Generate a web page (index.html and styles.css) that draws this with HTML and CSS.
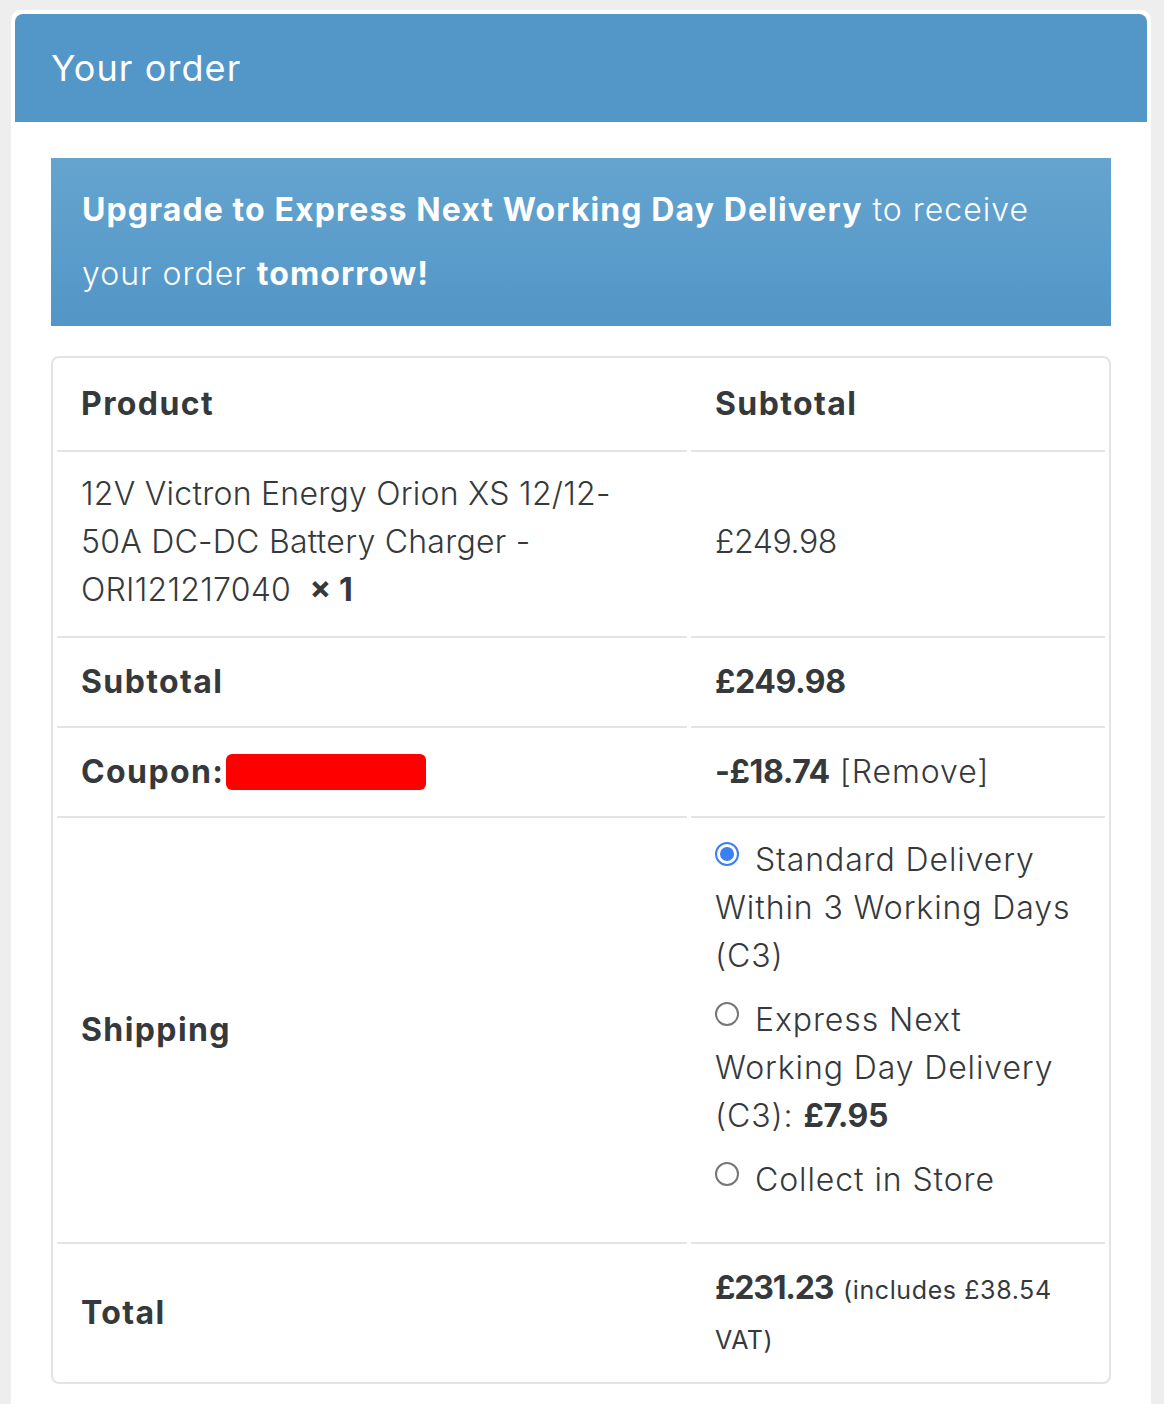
FILE: index.html
```html
<!DOCTYPE html>
<html lang="en">
<head>
<meta charset="utf-8">
<title>Your order</title>
<link rel="stylesheet" href="styles.css">
</head>
<body>
<div class="card">
  <h3 class="card-title">Your order</h3>
  <div class="card-body">
    <div class="upsell">
      <strong>Upgrade to Express Next Working Day Delivery</strong> to receive your order <strong>tomorrow!</strong>
    </div>
    <table class="order-table">
      <colgroup>
        <col class="col-left">
        <col class="col-right">
      </colgroup>
      <thead>
        <tr>
          <th>Product</th>
          <th>Subtotal</th>
        </tr>
      </thead>
      <tbody>
        <tr class="item-row">
          <td class="product-name">12V Victron Energy Orion XS 12/12-50A DC-DC Battery Charger - ORI121217040&nbsp; <strong class="qty">×&nbsp;1</strong></td>
          <td class="num">£249.98</td>
        </tr>
      </tbody>
      <tfoot>
        <tr>
          <th>Subtotal</th>
          <td><strong class="num">£249.98</strong></td>
        </tr>
        <tr>
          <th>Coupon: <span class="redact"></span></th>
          <td><strong class="num">-£18.74</strong> [Remove]</td>
        </tr>
        <tr>
          <th>Shipping</th>
          <td class="shipping">
            <ul class="methods">
              <li><span class="radio checked"></span>Standard Delivery Within 3 Working Days (C3)</li>
              <li><span class="radio"></span>Express Next Working Day Delivery (C3): <strong class="num">£7.95</strong></li>
              <li><span class="radio"></span>Collect in Store</li>
            </ul>
          </td>
        </tr>
        <tr class="total-row">
          <th>Total</th>
          <td><strong class="num total-num">£231.23</strong> <small>(includes £38.54 VAT)</small></td>
        </tr>
      </tfoot>
    </table>
  </div>
</div>
</body>
</html>
```
FILE: styles.css
```css
* { box-sizing: border-box; }
html, body { margin: 0; padding: 0; }
body {
  background: #eeeeee;
  font-family: Inter, "Noto Sans", sans-serif;
  color: #35393c;
  padding: 10px 0 0 11px;
}
.card {
  width: 1140px;
  background: #ffffff;
  border-radius: 10px 10px 0 0;
  padding: 4px 4px 0 4px;
  min-height: 1394px;
}
.card-title {
  margin: 0;
  background: #5397c8;
  color: #ffffff;
  border-radius: 8px 8px 0 0;
  height: 108px;
  padding: 0 36px;
  display: flex;
  align-items: center;
  font-size: 36px;
  font-weight: 400;
  letter-spacing: 1.1px;
}
.card-body {
  padding: 36px 36px 0 36px;
}
.upsell {
  background: linear-gradient(to bottom, #65a4cf, #5296c7);
  color: #ffffff;
  font-size: 32px;
  line-height: 64px;
  font-weight: 300;
  padding: 20px 30px 20px 31px;
  letter-spacing: 1px;
}
.upsell strong { font-weight: 700; letter-spacing: 1.1px; }
.order-table {
  margin-top: 30px;
  width: 1060px;
  border: 2px solid #e4e4e4;
  border-radius: 8px;
  border-collapse: separate;
  border-spacing: 4px 0;
  table-layout: fixed;
  font-size: 32px;
  line-height: 48px;
}
.col-left { width: 630px; }
.col-right { width: 414px; }
.order-table th,
.order-table td {
  text-align: left;
  vertical-align: middle;
  padding: 20px 24px 20px 24px;
  border-bottom: 2px solid #e4e4e4;
}
.order-table th { font-weight: 700; letter-spacing: 1.4px; }
.order-table td { font-weight: 300; letter-spacing: 0.9px; }
.order-table strong { font-weight: 700; }
.order-table .num { letter-spacing: -0.4px; }
.order-table thead th { padding-top: 22px; padding-bottom: 22px; }
.order-table .item-row td { padding-top: 18px; padding-bottom: 22px; }
.order-table .product-name { padding-right: 40px; letter-spacing: 0.25px; }
.qty { font-weight: 700; letter-spacing: 0; }
.redact {
  display: inline-block;
  width: 200px;
  height: 36px;
  background: #ff0000;
  border-radius: 6px;
  vertical-align: -7px;
  margin-left: -7px;
}
.order-table .shipping { padding-top: 18px; padding-bottom: 22px; }
.methods {
  list-style: none;
  margin: 0;
  padding: 0;
}
.methods li { margin-bottom: 16px; }
.radio {
  display: inline-block;
  width: 24px;
  height: 24px;
  border: 2px solid #767676;
  border-radius: 50%;
  margin-right: 16px;
  vertical-align: 5px;
  position: relative;
  background: #ffffff;
}
.radio.checked {
  border-color: #3b7ff0;
}
.radio.checked::after {
  content: "";
  position: absolute;
  left: 3px;
  top: 3px;
  width: 14px;
  height: 14px;
  border-radius: 50%;
  background: #3b7ff0;
}
.order-table .total-row th,
.order-table .total-row td { border-bottom: none; padding-top: 19px; padding-bottom: 19px; }
.total-row td { line-height: 50px; }
.order-table .total-num { letter-spacing: -1.2px; }
.total-row small { font-size: 25px; font-weight: 400; letter-spacing: 0.6px; line-height: 1; }
```
